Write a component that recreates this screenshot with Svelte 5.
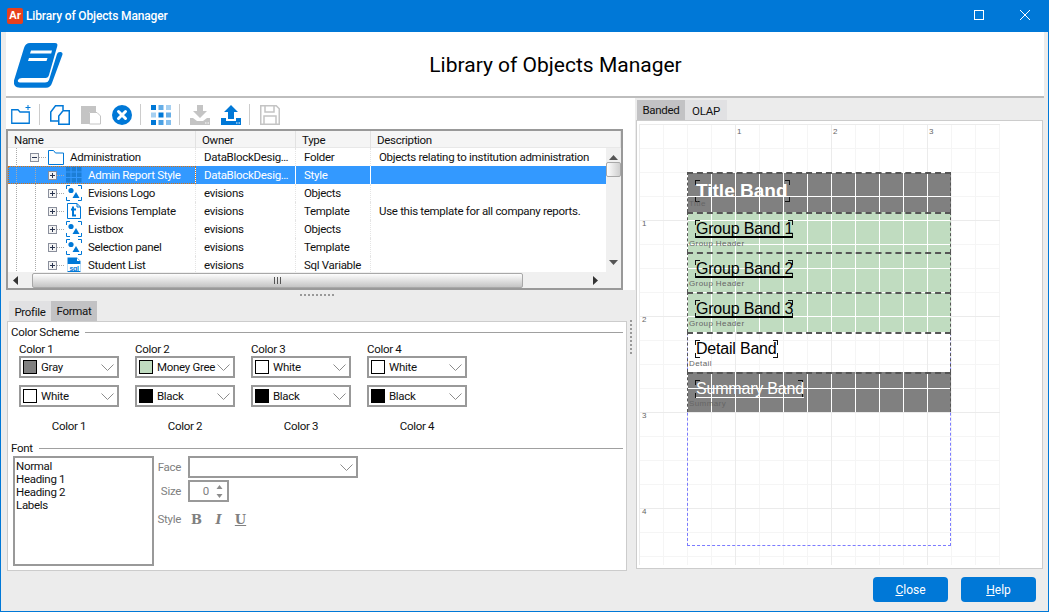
<script>
  const items = [
    { name: "Evisions Logo", owner: "evisions", type: "Objects", desc: "", icon: "obj" },
    { name: "Evisions Template", owner: "evisions", type: "Template", desc: "Use this template for all company reports.", icon: "tpl" },
    { name: "Listbox", owner: "evisions", type: "Objects", desc: "", icon: "obj" },
    { name: "Selection panel", owner: "evisions", type: "Template", desc: "", icon: "obj" },
    { name: "Student List", owner: "evisions", type: "Sql Variable", desc: "", icon: "sql" }
  ];

  const colors = [
    { title: "Color 1", a: ["Gray", "#808080"], b: ["White", "#fff"] },
    { title: "Color 2", a: ["Money Gree", "#c0dcc0"], b: ["Black", "#000"] },
    { title: "Color 3", a: ["White", "#fff"], b: ["Black", "#000"] },
    { title: "Color 4", a: ["White", "#fff"], b: ["Black", "#000"] }
  ];

  const bands = [
    { text: "Title Band", label: "Title", kind: "title", w: 95 },
    { text: "Group Band 1", label: "Group Header", kind: "group", w: 98 },
    { text: "Group Band 2", label: "Group Header", kind: "group", w: 98 },
    { text: "Group Band 3", label: "Group Header", kind: "group", w: 98 },
    { text: "Detail Band", label: "Detail", kind: "detail", w: 83 },
    { text: "Summary Band", label: "Summary", kind: "summary", w: 108 }
  ];

  const grid3 = ["#0078d7", "#66aee7", "#a6d0f1", "#a6d0f1", "#0078d7", "#66aee7", "#0078d7", "#4ca1e3", "#85bfed"];
  const rulerX = [[98, "1"], [194, "2"], [290, "3"]];
  const rulerY = [[96, "1"], [192, "2"], [288, "3"], [384, "4"]];
</script>

{#snippet combo(text, swatch, width)}
  <div class="combo" class:off={!text} style="width:{width}px">
    {#if swatch}<span class="swatch" style="background:{swatch}"></span>{/if}
    <span class="combo-text">{text}</span>
    <svg class="chev" width="13" height="7" viewBox="0 0 13 7"><path d="M.5.5l6 6 6-6" fill="none" stroke="#8c8c8c"/></svg>
  </div>
{/snippet}

{#snippet expander(open)}
  <span class="exp">
    <svg width="9" height="9" viewBox="0 0 9 9">
      <rect x=".5" y=".5" width="8" height="8" fill="#f4f4f4" stroke="#8a8f9c"/>
      <path d={open ? "M2 4.5h5" : "M2 4.5h5M4.5 2v5"} stroke="#2a3550"/>
    </svg>
  </span>
{/snippet}

{#snippet treeIcon(kind, sel)}
  <svg class="ticon" width="16" height="16" viewBox="0 0 16 16">
    {#if kind === "obj"}
      <path d="M.5 4V.5H4M12 .5h3.5V4M.5 12v3.5H4M12 15.5h3.5V12" fill="none" stroke="#0078d7"/>
      <circle cx="5" cy="5.5" r="2.6" fill="#0078d7"/>
      <path d="M10 7l3.5 6h-7z" fill="#0078d7"/>
    {:else if kind === "tpl"}
      <path d="M1.5.5H11l3.5 3.5v11.5h-13z" fill="#fff" stroke="#0078d7"/>
      <path d="M11 .5V4h3.5" fill="none" stroke="#0078d7"/>
      <path d="M7 3.5v9h3M5 6.5h5" fill="none" stroke="#0078d7" stroke-width="2"/>
    {:else if kind === "sql"}
      <path d="M1.5 15.5V.5H11l3.5 3.5v11.5z" fill="#0078d7"/>
      <path d="M11 1v3h3" fill="#fff"/>
      <rect x="1.500" y="7" width="13" height="7" fill="#fff"/>
      <text x="8" y="13.500" text-anchor="middle" class="sqltext">sql</text>
    {:else if kind === "style"}
      {#each [0, 1, 2] as r}
        {#each [0, 1, 2] as c}
          <rect x={c * 5.5} y={r * 5.5} width="4.500" height="4.500" fill={sel ? "#1c7ed6" : "#0078d7"}/>
        {/each}
      {/each}
    {/if}
  </svg>
{/snippet}

<div class="window">
  <div class="titlebar">
    <span class="app-icon">Ar</span>
    <span class="app-title">Library of Objects Manager</span>
    <svg class="winctl" width="56" height="12" viewBox="0 0 56 12">
      <rect x=".5" y=".5" width="9" height="9" fill="none" stroke="#fff"/>
      <path d="M46 0l10 10M56 0L46 10" stroke="#fff" fill="none"/>
    </svg>
  </div>

  <div class="header">
    <svg class="book" width="50" height="47" viewBox="13 42 50 47">
      <path d="M30 43h25q3 0 2.300 3L49 75q-.8 3-3.500 3H22q-3 0-4 2-.8 2 2 2.500h25q3 0 4-2.500l8-26q.5-2 3-2h1q2 .5 1.500 2.500L52 83q-1.500 4.800-6 4.800H20q-7 0-6-7.300L24 48q1.500-5 6-5z" fill="#0078d7"/>
      <path d="M31 50.500h21l-.8 3H30zM29 58h18.500l-1 3H28z" fill="#fff"/>
    </svg>
    <h1>Library of Objects Manager</h1>
  </div>

  <div class="main">
    <div class="left">
      <div class="top-pane">
        <div class="toolbar">
          <svg width="20" height="20" viewBox="0 0 20 20">
            <path d="M.75 18.250V4.750H7L9 7h9.250v11.250z" fill="none" stroke="#0078d7" stroke-width="1.300"/>
            <path d="M17 0v5M14.500 2.500h5" stroke="#0078d7"/>
          </svg>
          <i class="sep"></i>
          <svg width="20" height="20" viewBox="0 0 20 20">
            <path d="M8 16H.75V7L5.500.75H13V5" fill="none" stroke="#0078d7" stroke-width="1.500"/>
            <path d="M13 5.750h6.250v13.500H8.750V11z" fill="#fff" stroke="#0078d7" stroke-width="1.500"/>
          </svg>
          <svg width="20" height="20" viewBox="0 0 20 20">
            <path d="M0 1h15v6H8v12H0z" fill="#c4c4c4"/>
            <path d="M8.500 7.500H16l3.500 3.500v8H8.500z" fill="#fff" stroke="#c4c4c4"/>
          </svg>
          <svg width="20" height="20" viewBox="0 0 20 20">
            <circle cx="10" cy="10" r="10" fill="#0078d7"/>
            <path d="M6.500 6.500l7 7M13.500 6.500l-7 7" stroke="#fff" stroke-width="3" stroke-linecap="round"/>
          </svg>
          <i class="sep"></i>
          <svg width="20" height="20" viewBox="0 0 20 20">
            {#each grid3 as fill, i}
              <rect x={(i % 3) * 7.5} y={Math.floor(i / 3) * 7.5} width="5" height="5" {fill}/>
            {/each}
          </svg>
          <i class="sep"></i>
          <svg width="20" height="20" viewBox="0 0 20 20">
            <path d="M7 0h6v6h4l-7 7-7-7h4z" fill="#c4c4c4"/>
            <path d="M0 13h3l4 3h6l4-3h3v7H0z" fill="#c4c4c4"/>
            <path d="M15 18h1.500M17.500 18H19" stroke="#fff"/>
          </svg>
          <svg width="20" height="20" viewBox="0 0 20 20">
            <path d="M10 0l7 7h-4v7H7V7H3z" fill="#0078d7"/>
            <path d="M0 13h5v3h10v-3h5v7H0z" fill="#0078d7"/>
            <path d="M15 18h1.500M17.500 18H19" stroke="#fff"/>
          </svg>
          <i class="sep"></i>
          <svg width="20" height="20" viewBox="0 0 20 20">
            <path d="M.75.75h15.500l3 3v15.500H.75z" fill="none" stroke="#c4c4c4" stroke-width="1.500"/>
            <path d="M5 1v6h9V1M4 19v-8h12v8" fill="none" stroke="#c4c4c4" stroke-width="1.500"/>
          </svg>
        </div>

        <div class="tree">
          <div class="thead">
            <span>Name</span><span>Owner</span><span>Type</span><span>Description</span>
          </div>
          <div class="tbody">
            <div class="rows">
              <div class="row">
                <div class="cell name guides-a" style="padding-left:22px">
                  {@render expander(true)}
                  <svg class="ticon" width="16" height="15" viewBox="0 0 16 15"><path d="M.5 14.500V.5h5l2 2.500h8v11.500z" fill="none" stroke="#0078d7"/></svg>
                  <span class="tname">Administration</span>
                </div>
                <div class="cell">DataBlockDesig…</div>
                <div class="cell">Folder</div>
                <div class="cell last">Objects relating to institution administration</div>
              </div>
              <div class="row selected">
                <div class="cell name guides-b focus" style="padding-left:40px">
                  {@render expander(false)}
                  {@render treeIcon("style", true)}
                  <span class="tname">Admin Report Style</span>
                </div>
                <div class="cell">DataBlockDesig…</div>
                <div class="cell">Style</div>
                <div class="cell last"></div>
              </div>
              {#each items as item}
                <div class="row">
                  <div class="cell name guides-b" style="padding-left:40px">
                    {@render expander(false)}
                    {@render treeIcon(item.icon, false)}
                    <span class="tname">{item.name}</span>
                  </div>
                  <div class="cell">{item.owner}</div>
                  <div class="cell">{item.type}</div>
                  <div class="cell last">{item.desc}</div>
                </div>
              {/each}
            </div>
            <div class="vscroll">
              <svg class="arrow-v" width="9" height="5" viewBox="0 0 9 5"><path d="M4.500 0L9 5H0z" fill="#555"/></svg>
              <div class="vthumb"></div>
              <svg class="arrow-v end" width="9" height="5" viewBox="0 0 9 5"><path d="M0 0h9L4.500 5z" fill="#555"/></svg>
            </div>
          </div>
          <div class="hscroll">
            <svg class="arrow-h" width="5" height="9" viewBox="0 0 5 9"><path d="M5 0v9L0 4.500z" fill="#333"/></svg>
            <div class="hthumb"><span class="grip"></span></div>
            <svg class="arrow-h end" width="5" height="9" viewBox="0 0 5 9"><path d="M0 0v9l5-4.500z" fill="#333"/></svg>
          </div>
        </div>
      </div>

      <div class="hsplit"><span class="dots-h"></span></div>

      <div class="tabs lefttabs">
        <span class="tab w42">Profile</span>
        <span class="tab active w46">Format</span>
      </div>
      <div class="panel">
        <div class="legend"><span>Color Scheme</span><i></i></div>
        <div class="scheme">
          {#each colors as col}
            <div class="col">
              <div class="col-title">{col.title}</div>
              {@render combo(col.a[0], col.a[1], 100)}
              <div class="gap7"></div>
              {@render combo(col.b[0], col.b[1], 100)}
              <div class="col-caption">{col.title}</div>
            </div>
          {/each}
        </div>
        <div class="legend fontlegend"><span>Font</span><i></i></div>
        <div class="fontbox">
          <div class="listbox">
            <div>Normal</div>
            <div>Heading 1</div>
            <div>Heading 2</div>
            <div>Labels</div>
          </div>
          <div class="fontprops">
            <div class="prop"><span class="plabel">Face</span>{@render combo("", "", 170)}</div>
            <div class="prop"><span class="plabel">Size</span>
              <div class="spin">
                <span class="spinval">0</span>
                <svg width="7" height="15" viewBox="0 0 7 15"><path d="M3.500 1L6.500 5h-6zM3.500 14L.5 10h6z" fill="#8c8c8c"/></svg>
              </div>
            </div>
            <div class="prop styleprop"><span class="plabel">Style</span>
              <span class="fmt b">B</span><span class="fmt i">I</span><span class="fmt u">U</span>
            </div>
          </div>
        </div>
      </div>
    </div>

    <div class="vsplit"><span class="dots-v"></span></div>

    <div class="right">
      <div class="tabs righttabs">
        <span class="tab active w48">Banded</span>
        <span class="tab w42">OLAP</span>
      </div>
      <div class="preview">
        <div class="canvas">
          {#each rulerX as [x, n]}
            <span class="ruler" style="left:{x}px;top:3px">{n}</span>
          {/each}
          {#each rulerY as [y, n]}
            <span class="ruler" style="left:3px;top:{y - 1}px">{n}</span>
          {/each}
          <div class="page">
            {#each bands as band, i}
              <div class="band {band.kind}" style="background-position:0 {-i * 40}px">
                <div class="field" style="width:{band.w}px"><span>{band.text}</span></div>
                <span class="bandlabel">{band.label}</span>
              </div>
            {/each}
          </div>
        </div>
      </div>
    </div>
  </div>

  <div class="footer">
    <button><u>C</u>lose</button>
    <button><u>H</u>elp</button>
  </div>
</div>

<style>
  :global(body) {
    margin: 0;
  }

  .window {
    width: 1049px;
    height: 612px;
    box-sizing: border-box;
    border: 1px solid #0078d7;
    border-top: 0;
    background: #ececec;
    font: 11.5px/14px Roboto, sans-serif;
    letter-spacing: -.3px;
    color: #111;
    overflow: hidden;
    display: flex;
    flex-direction: column;
  }

  .titlebar {
    height: 32px;
    margin: 0 -1px;
    background: #0078d7;
    color: #fff;
    display: flex;
    align-items: center;
    padding: 0 19px 0 7px;
    flex: none;
  }

  .app-icon {
    width: 16px;
    height: 16px;
    background: #e8401c;
    border-radius: 2px;
    font: bold 11px/15px "Liberation Sans", sans-serif;
    letter-spacing: 0;
    text-align: center;
  }

  .app-title {
    margin-left: 3px;
    font-size: 12px;
    font-weight: 500;
    letter-spacing: -.15px;
    flex: 1;
  }

  .header {
    height: 64px;
    margin: 0 4px 0 5px;
    background: #fff;
    border-bottom: 2px solid #bdbdbd;
    position: relative;
    display: flex;
    align-items: center;
    justify-content: center;
    flex: none;
  }

  .book {
    position: absolute;
    left: 7px;
    top: 10px;
  }

  h1 {
    margin: 2px 0 0 61px;
    font: 400 21px/28px Roboto, sans-serif;
    letter-spacing: 0;
    color: #000;
  }

  .main {
    display: flex;
    padding-left: 5px;
    flex: none;
    height: 473px;
  }

  .left {
    width: 621px;
    flex: none;
  }

  .top-pane {
    background: #fff;
    width: 629px;
    height: 192px;
  }

  .toolbar {
    height: 31px;
    box-sizing: border-box;
    padding: 7px 0 0 5px;
    display: flex;
    align-items: flex-start;
    gap: 11px;
  }

  .sep {
    width: 1px;
    height: 21px;
    background: #ccc;
    margin: -1px -1px 0 -3px;
  }

  .tree {
    width: 617px;
    height: 161px;
    box-sizing: border-box;
    border: 2px solid #999;
    background: #fff;
  }

  .thead {
    display: grid;
    grid-template-columns: 188px 100px 75px 1fr;
    height: 17px;
    background: #f5f5f5;
    border-bottom: 1px solid #e8e8e8;
    box-sizing: border-box;
  }

  .thead span {
    padding-left: 6px;
    line-height: 19px;
    border-right: 1px solid #e2e2e2;
  }

  .tbody {
    display: flex;
    height: 124px;
  }

  .rows {
    width: 598px;
    overflow: hidden;
  }

  .row {
    display: grid;
    grid-template-columns: 188px 100px 75px 1fr;
    height: 18px;
  }

  .cell {
    box-sizing: border-box;
    padding-left: 8px;
    line-height: 18px;
    border-right: 1px dotted #e4e4e4;
    white-space: nowrap;
    overflow: hidden;
  }

  .cell.last {
    border-right: 0;
  }

  .cell.name {
    display: flex;
    align-items: center;
  }

  .selected {
    background: #3399ff;
    color: #fff;
  }

  .selected .cell {
    border-right: 1px solid #fff;
  }

  .selected .cell.last {
    border-right: 0;
  }

  .selected .name.focus {
    outline: 1px dotted #d9700f;
    outline-offset: -1px;
  }

  .guides-a {
    background: repeating-linear-gradient(#aaa 0 1px, transparent 1px 2px) 8px 0 / 1px 100% no-repeat;
  }

  .guides-b {
    background:
      repeating-linear-gradient(#aaa 0 1px, transparent 1px 2px) 8px 0 / 1px 100% no-repeat,
      repeating-linear-gradient(#aaa 0 1px, transparent 1px 2px) 27px 0 / 1px 100% no-repeat;
  }

  .exp {
    width: 18px;
    flex: none;
    height: 9px;
    display: flex;
    background: repeating-linear-gradient(90deg, #aaa 0 1px, transparent 1px 2px) 9px 4px / 8px 1px no-repeat;
  }

  .ticon {
    flex: none;
    display: block;
  }

  .tname {
    margin-left: 6px;
  }

  .sqltext {
    font: bold 7px "Liberation Sans", sans-serif;
    fill: #0078d7;
  }

  .vscroll {
    width: 15px;
    background: #f0f0f0;
    display: flex;
    flex-direction: column;
    align-items: center;
    padding-top: 7px;
    box-sizing: border-box;
  }

  .arrow-v.end {
    margin-top: auto;
    margin-bottom: 7px;
  }

  .vthumb {
    width: 15px;
    height: 15px;
    margin-top: 2px;
    box-sizing: border-box;
    border: 1px solid #a8a8a8;
    border-radius: 2px;
    background: linear-gradient(90deg, #fdfdfd, #cfcfcf);
  }

  .hscroll {
    height: 16px;
    background: #f0f0f0;
    display: flex;
    align-items: center;
    padding-left: 5px;
    padding-right: 23px;
  }

  .arrow-h.end {
    margin-left: auto;
  }

  .hthumb {
    width: 491px;
    height: 15px;
    margin-left: 14px;
    box-sizing: border-box;
    border: 1px solid #a8a8a8;
    border-radius: 2px;
    background: linear-gradient(#fdfdfd, #c4c4c4);
    display: flex;
    justify-content: center;
    align-items: center;
  }

  .grip {
    width: 7px;
    height: 7px;
    background: repeating-linear-gradient(90deg, #555 0 1px, transparent 1px 3px);
  }

  .hsplit {
    height: 11px;
    display: flex;
    justify-content: center;
    padding-top: 4px;
    box-sizing: border-box;
    width: 621px;
  }

  .dots-h {
    width: 34px;
    height: 2px;
    background: repeating-linear-gradient(90deg, #999 0 2px, transparent 2px 4px);
  }

  .tabs {
    display: flex;
    height: 20px;
  }

  .tab {
    line-height: 22px;
    background: #e1e1e3;
    text-align: center;
  }

  .tab.active {
    background: #c2c2c4;
    line-height: 20px;
  }

  .w42 {
    width: 42px;
  }

  .w46 {
    width: 46px;
  }

  .w48 {
    width: 48px;
  }

  .lefttabs {
    padding-left: 3px;
  }

  .panel {
    margin-left: 1px;
    width: 620px;
    height: 250px;
    box-sizing: border-box;
    border: 1px solid #ccc;
    background: #fff;
    padding: 3px 3px 0;
  }

  .legend {
    display: flex;
    align-items: center;
    gap: 6px;
    height: 14px;
  }

  .legend i {
    flex: 1;
    height: 1px;
    background: #a0a0a0;
  }

  .scheme {
    display: flex;
    gap: 16px;
    margin: 3px 0 0 8px;
  }

  .col-title {
    height: 14px;
  }

  .gap7 {
    height: 7px;
  }

  .col-caption {
    margin-top: 11px;
    line-height: 16px;
    text-align: center;
  }

  .combo {
    height: 22px;
    box-sizing: border-box;
    border: 2px solid #999;
    background: #fff;
    display: flex;
    align-items: center;
    padding-left: 2px;
    position: relative;
  }

  .swatch {
    width: 14px;
    height: 14px;
    box-sizing: border-box;
    border: 1px solid #000;
    margin-right: 4px;
    flex: none;
  }

  .combo-text {
    white-space: nowrap;
    width: 58px;
  }

  .chev {
    position: absolute;
    right: 3px;
    top: 6px;
  }

  .fontlegend {
    margin-top: 7px;
  }

  .fontbox {
    display: flex;
    margin: 1px 0 0 2px;
  }

  .listbox {
    width: 141px;
    height: 110px;
    box-sizing: border-box;
    border: 2px solid #999;
    padding: 2px 1px;
    line-height: 13px;
  }

  .fontprops {
    display: flex;
    flex-direction: column;
    gap: 2px;
  }

  .prop {
    display: flex;
    align-items: center;
    height: 22px;
  }

  .plabel {
    width: 27px;
    margin-right: 7px;
    text-align: right;
    color: #808080;
  }

  .spin {
    width: 41px;
    height: 22px;
    box-sizing: border-box;
    border: 2px solid #999;
    display: flex;
    align-items: center;
    justify-content: flex-end;
    padding-right: 4px;
    gap: 7px;
    color: #808080;
  }

  .styleprop {
    margin-top: 4px;
  }

  .fmt {
    font: bold 13px "DejaVu Serif", serif;
    letter-spacing: 0;
    color: #808080;
    width: 23px;
    text-align: center;
    margin-left: -1px;
  }

  .fmt.b {
    margin-left: -3px;
  }

  .fmt.i {
    font-style: italic;
  }

  .fmt.u {
    text-decoration: underline;
  }

  .vsplit {
    width: 9px;
    flex: none;
    margin-left: 0;
    display: flex;
    justify-content: center;
    padding-top: 222px;
    box-sizing: border-box;
  }

  .dots-v {
    width: 2px;
    height: 34px;
    background: repeating-linear-gradient(#999 0 2px, transparent 2px 4px);
    margin-left: -2px;
  }

  .right {
    width: 407px;
    flex: none;
    padding-top: 2px;
    position: relative;
    z-index: 1;
  }

  .righttabs {
    padding-left: 1px;
  }

  .preview {
    height: 449px;
    box-sizing: border-box;
    border: 1px solid #ccc;
    background: #fff;
    padding: 3px 0 0 2px;
  }

  .canvas {
    position: relative;
    width: 361px;
    height: 441px;
    box-sizing: border-box;
    padding: 48px 0 0 48px;
    background-color: #fff;
    background-image:
      linear-gradient(90deg, #ebebeb 1px, transparent 1px),
      linear-gradient(#ebebeb 1px, transparent 1px),
      linear-gradient(90deg, #f5f5f5 1px, transparent 1px),
      linear-gradient(#f5f5f5 1px, transparent 1px);
    background-size: 96px 96px, 96px 96px, 24px 24px, 24px 24px;
  }

  .ruler {
    position: absolute;
    font: 8px/10px "Liberation Sans", sans-serif;
    letter-spacing: 0;
    color: #666;
  }

  .page {
    width: 264px;
    height: 374px;
    box-sizing: border-box;
    border: 1px dashed #7b7bff;
    border-width: 0 1px 1px;
  }

  .band {
    height: 40px;
    margin: 0 -1px;
    box-sizing: border-box;
    border: 1px dashed #555;
    border-top: 2px dashed #555;
    border-bottom: 0;
    position: relative;
    padding: 6px 0 0 7px;
    background-image:
      linear-gradient(90deg, #fff 1px, transparent 1px),
      linear-gradient(#fff 1px, transparent 1px);
    background-size: 24px 24px;
    background-origin: border-box;
  }

  .title,
  .summary {
    background-color: #808080;
    color: #fff;
  }

  .group {
    background-color: #c0dcc0;
    color: #000;
  }

  .detail {
    background-color: transparent;
    background-image: none;
    color: #000;
  }

  .field {
    height: 18px;
    box-sizing: border-box;
    padding-left: 1px;
    font: 16px/18px "Liberation Sans", sans-serif;
    letter-spacing: -.2px;
    white-space: nowrap;
    --h: #111;
    background:
      linear-gradient(var(--h), var(--h)) 0 0 / 5px 1px no-repeat,
      linear-gradient(var(--h), var(--h)) 0 0 / 1px 5px no-repeat,
      linear-gradient(var(--h), var(--h)) 100% 0 / 5px 1px no-repeat,
      linear-gradient(var(--h), var(--h)) 100% 0 / 1px 5px no-repeat,
      linear-gradient(var(--h), var(--h)) 0 100% / 5px 1px no-repeat,
      linear-gradient(var(--h), var(--h)) 0 100% / 1px 5px no-repeat,
      linear-gradient(var(--h), var(--h)) 100% 100% / 5px 1px no-repeat,
      linear-gradient(var(--h), var(--h)) 100% 100% / 1px 5px no-repeat;
  }

  .title .field {
    height: 22px;
    font: bold 19px/22px "Liberation Sans", sans-serif;
    letter-spacing: 0;
  }

  .group .field span,
  .summary .field span {
    display: inline-block;
    height: 17px;
    border-bottom: 1px solid currentColor;
  }

  .group .field span {
    border-bottom-width: 2px;
    height: 16px;
  }

  .bandlabel {
    position: absolute;
    left: 1px;
    bottom: 3px;
    font: 8px/10px "Liberation Sans", sans-serif;
    letter-spacing: .4px;
    color: #666;
  }

  .footer {
    flex: 1;
    display: flex;
    justify-content: flex-end;
    gap: 13px;
    padding: 6px 12px 0 0;
  }

  button {
    width: 75px;
    height: 25px;
    border: 0;
    border-radius: 4px;
    background: #0078d7;
    color: #fff;
    font: 12px Roboto, sans-serif;
    padding: 0;
  }
</style>
